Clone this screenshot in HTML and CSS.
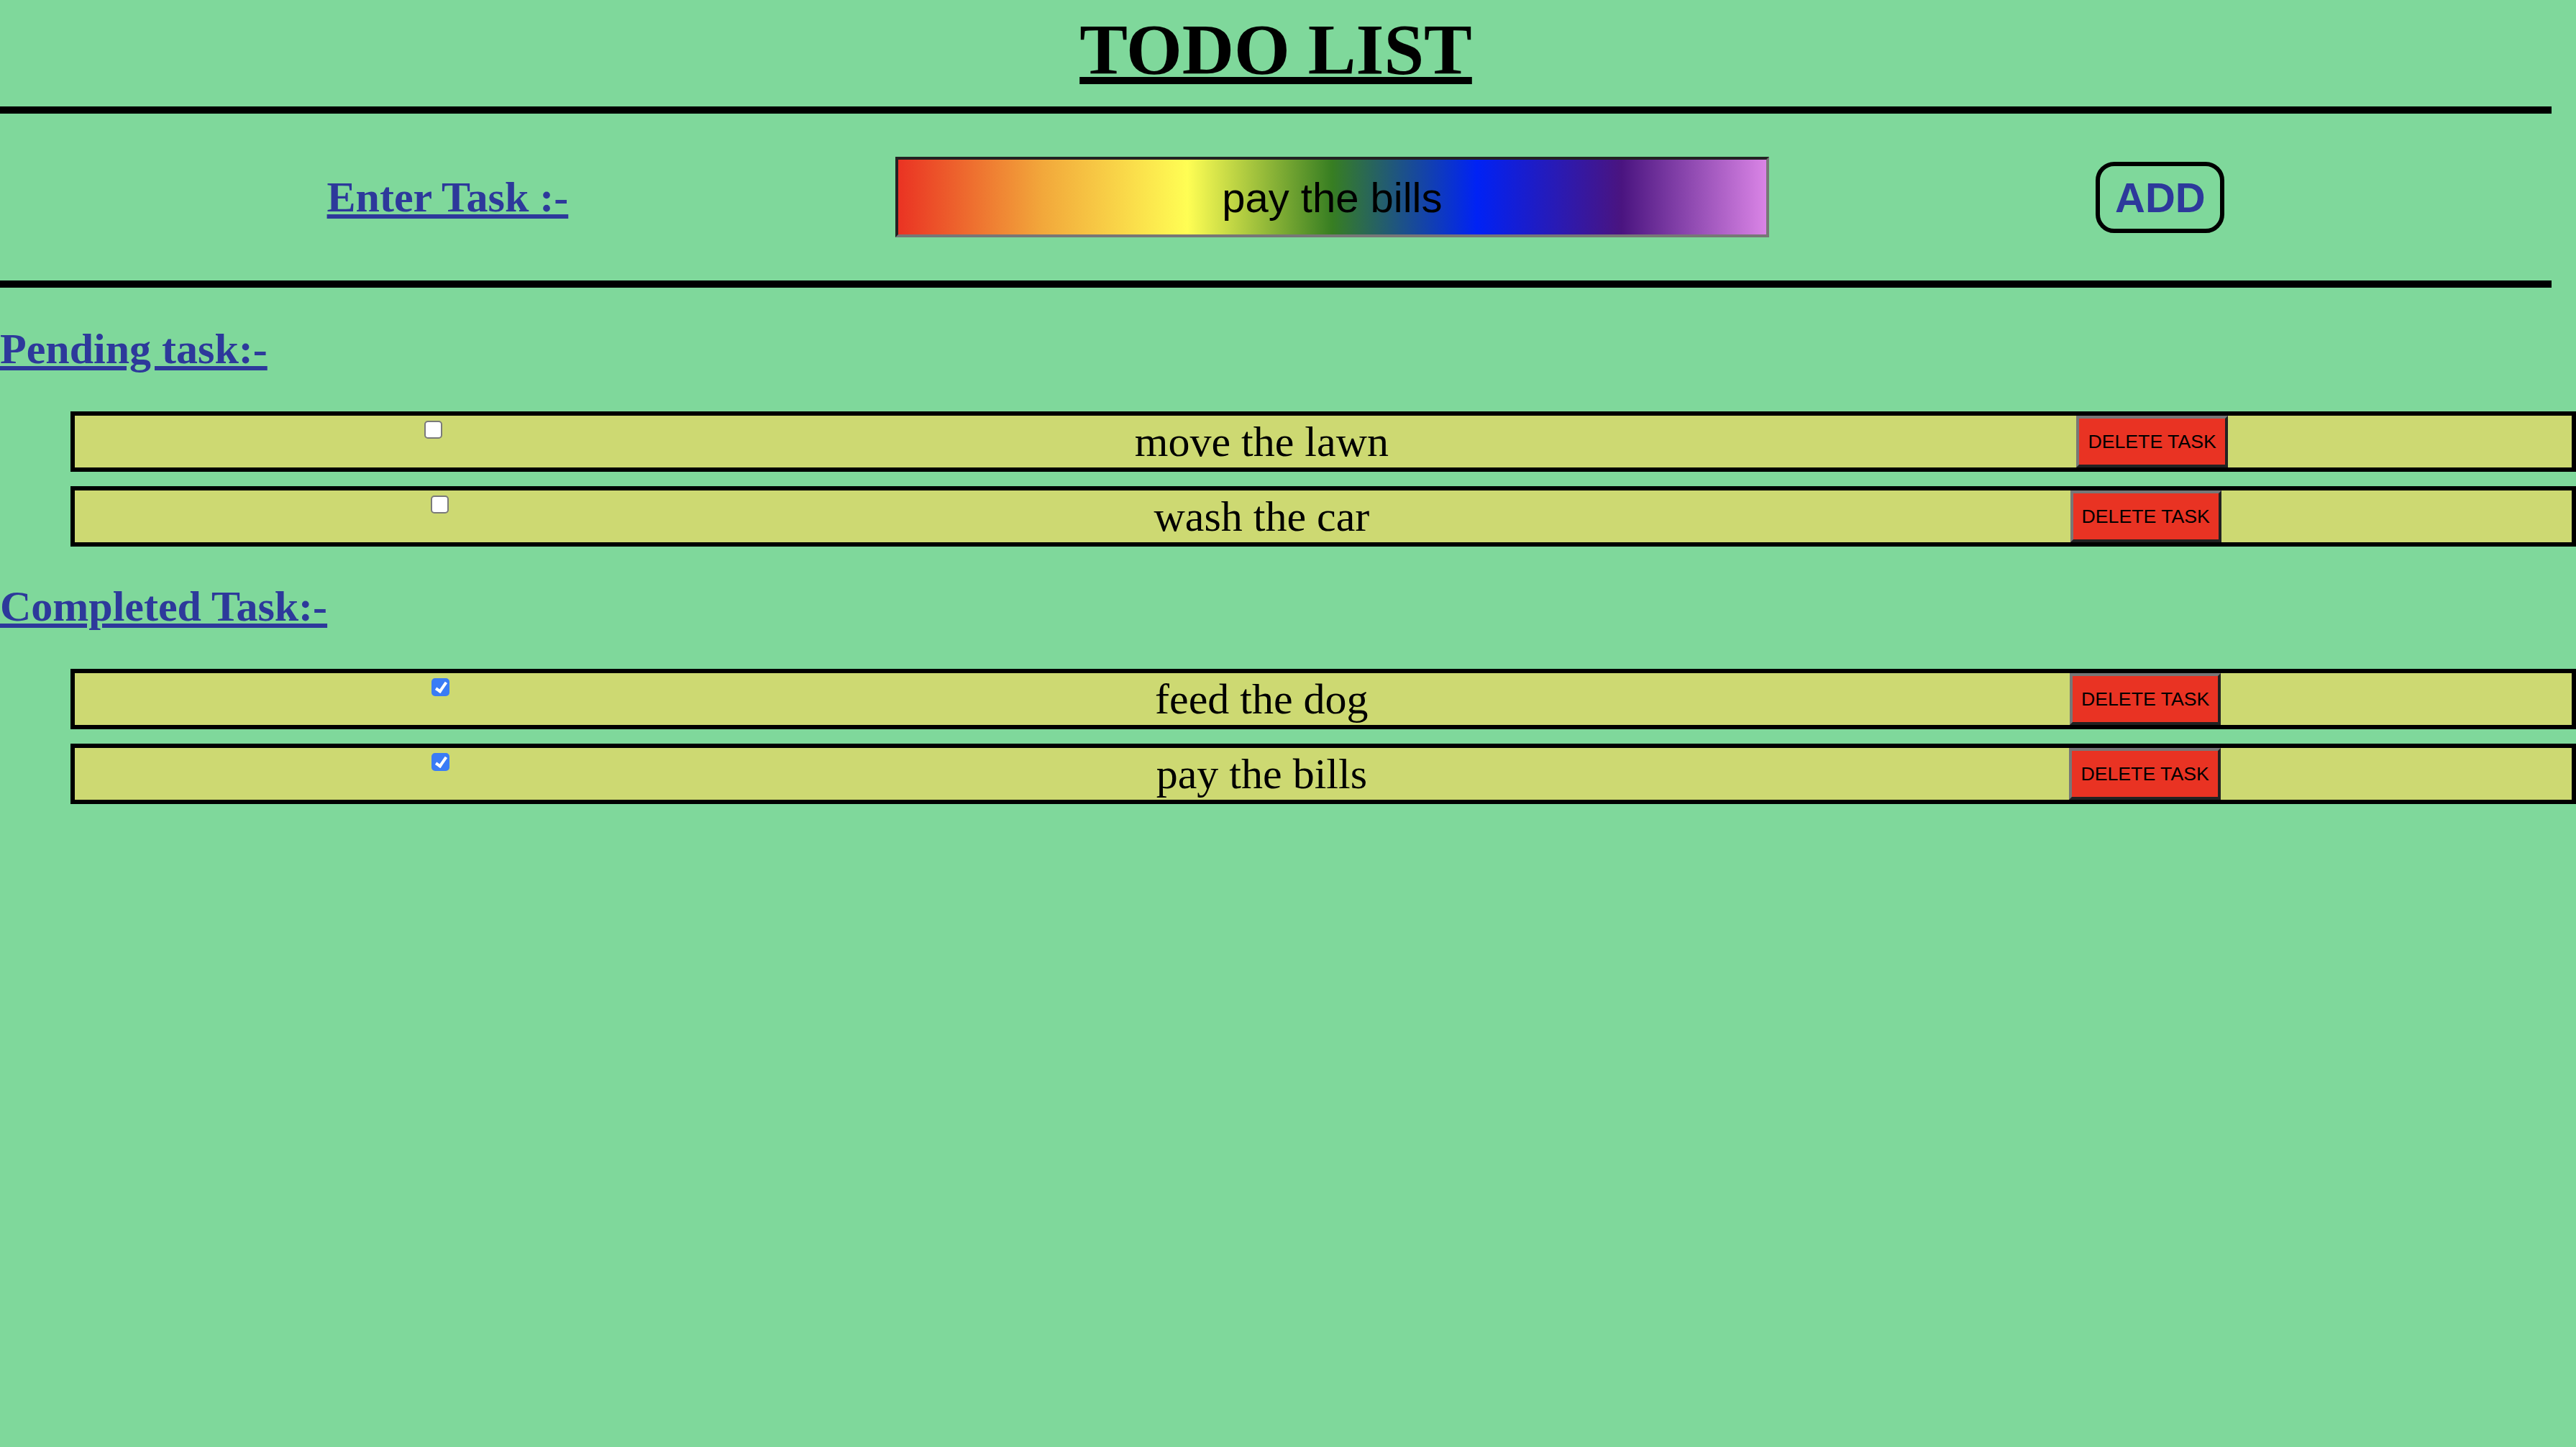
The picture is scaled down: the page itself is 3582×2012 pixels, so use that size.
FILE: index.html
```html
<!DOCTYPE html>
<html lang="en">
<head>
<meta charset="utf-8">
<title>TODO LIST</title>
<link rel="stylesheet" href="styles.css">
</head>
<body>
<div class="page">
  <h1 class="title">TODO LIST</h1>
  <div class="rule"></div>
  <div class="entry">
    <label class="label" for="task">Enter Task :-</label>
    <input class="task-input" id="task" type="text" value="pay the bills">
    <button class="add-btn">ADD</button>
  </div>
  <div class="rule"></div>

  <h2 class="section-title first">Pending task:-</h2>
  <ul class="task-list">
    <li class="task">
      <input class="check" type="checkbox">
      <span class="task-text">move the lawn</span>
      <button class="delete-btn">DELETE TASK</button>
    </li>
    <li class="task">
      <input class="check" type="checkbox">
      <span class="task-text">wash the car</span>
      <button class="delete-btn">DELETE TASK</button>
    </li>
  </ul>

  <h2 class="section-title">Completed Task:-</h2>
  <ul class="task-list">
    <li class="task">
      <input class="check" type="checkbox" checked>
      <span class="task-text">feed the dog</span>
      <button class="delete-btn">DELETE TASK</button>
    </li>
    <li class="task">
      <input class="check" type="checkbox" checked>
      <span class="task-text">pay the bills</span>
      <button class="delete-btn">DELETE TASK</button>
    </li>
  </ul>
</div>
</body>
</html>
```

FILE: styles.css
```css
html, body {
  margin: 0;
  padding: 0;
  background: #7fd89b;
}

body {
  font-family: "Liberation Serif", "Times New Roman", serif;
  color: #000;
  min-height: 2012px;
}

.page {
  display: flex;
  flex-direction: column;
}

.title {
  width: 3548px;
  margin: 0 0 22px 0;
  padding-top: 11px;
  font-size: 100px;
  line-height: 115px;
  font-weight: bold;
  text-align: center;
  text-decoration: underline;
  text-decoration-thickness: 10px;
  text-underline-offset: 5px;
}

.rule {
  width: 3548px;
  height: 10px;
  background: #000;
}

.entry {
  width: 3548px;
  height: 232px;
  display: flex;
  align-items: center;
  justify-content: space-evenly;
}

.label {
  font-size: 60px;
  font-weight: bold;
  color: #2d399b;
  text-decoration: underline;
  text-decoration-thickness: 6px;
  text-underline-offset: 4px;
}

.task-input {
  box-sizing: border-box;
  width: 1215px;
  height: 112px;
  margin: 0;
  padding: 0 8px;
  border-style: solid;
  border-width: 4px;
  border-color: #222 #777 #777 #222;
  background: linear-gradient(to right, #ea3323 0%, #f2a83b 16.67%, #fffe54 33.33%, #377e22 50%, #0022f5 66.67%, #4a1480 83.33%, #da84e6 100%);
  font-family: "Liberation Sans", Arial, sans-serif;
  font-size: 58px;
  color: #000;
  text-align: center;
  outline: none;
}

.add-btn {
  box-sizing: border-box;
  width: 179px;
  height: 99px;
  margin: 0;
  padding: 0;
  border: 6px solid #000;
  border-radius: 26px;
  background: transparent;
  font-family: "Liberation Sans", Arial, sans-serif;
  font-weight: bold;
  font-size: 58px;
  color: #2d399b;
}

.section-title {
  margin: 51px 0 52px 0;
  font-size: 60px;
  line-height: 69px;
  font-weight: bold;
  color: #2d399b;
  text-decoration: underline;
  text-decoration-thickness: 6px;
  text-underline-offset: 4px;
}

.task-list + .section-title {
  margin-top: 49px;
}

.task-list {
  list-style: none;
  margin: 0 0 0 98px;
  padding: 0;
  display: flex;
  flex-direction: column;
  gap: 20px;
}

.task {
  box-sizing: border-box;
  width: 3484px;
  height: 84px;
  border: 6px solid #000;
  background: #cdd972;
  display: flex;
  justify-content: space-around;
  align-items: stretch;
}

.check {
  appearance: none;
  -webkit-appearance: none;
  position: relative;
  box-sizing: border-box;
  width: 25px;
  height: 25px;
  margin: 7px 6px 6px 8px;
  align-self: flex-start;
  border: 2px solid #7a7a7a;
  border-radius: 5px;
  background: #fff;
}

.check:checked {
  border-color: #3a7cf6;
  background: #3a7cf6;
}

.check:checked::after {
  content: "";
  position: absolute;
  left: 7px;
  top: 1px;
  width: 5px;
  height: 13px;
  border-right: 4px solid #fff;
  border-bottom: 4px solid #fff;
  transform: rotate(35deg);
}

.task-text {
  font-size: 60px;
  line-height: 72px;
  white-space: nowrap;
}

.delete-btn {
  margin: 0;
  padding: 0 12px;
  border-style: solid;
  border-width: 4px;
  border-color: #777 #222 #222 #777;
  background: #e93323;
  color: #000;
  font-family: "Liberation Sans", Arial, sans-serif;
  font-size: 26.67px;
  white-space: nowrap;
}
```
